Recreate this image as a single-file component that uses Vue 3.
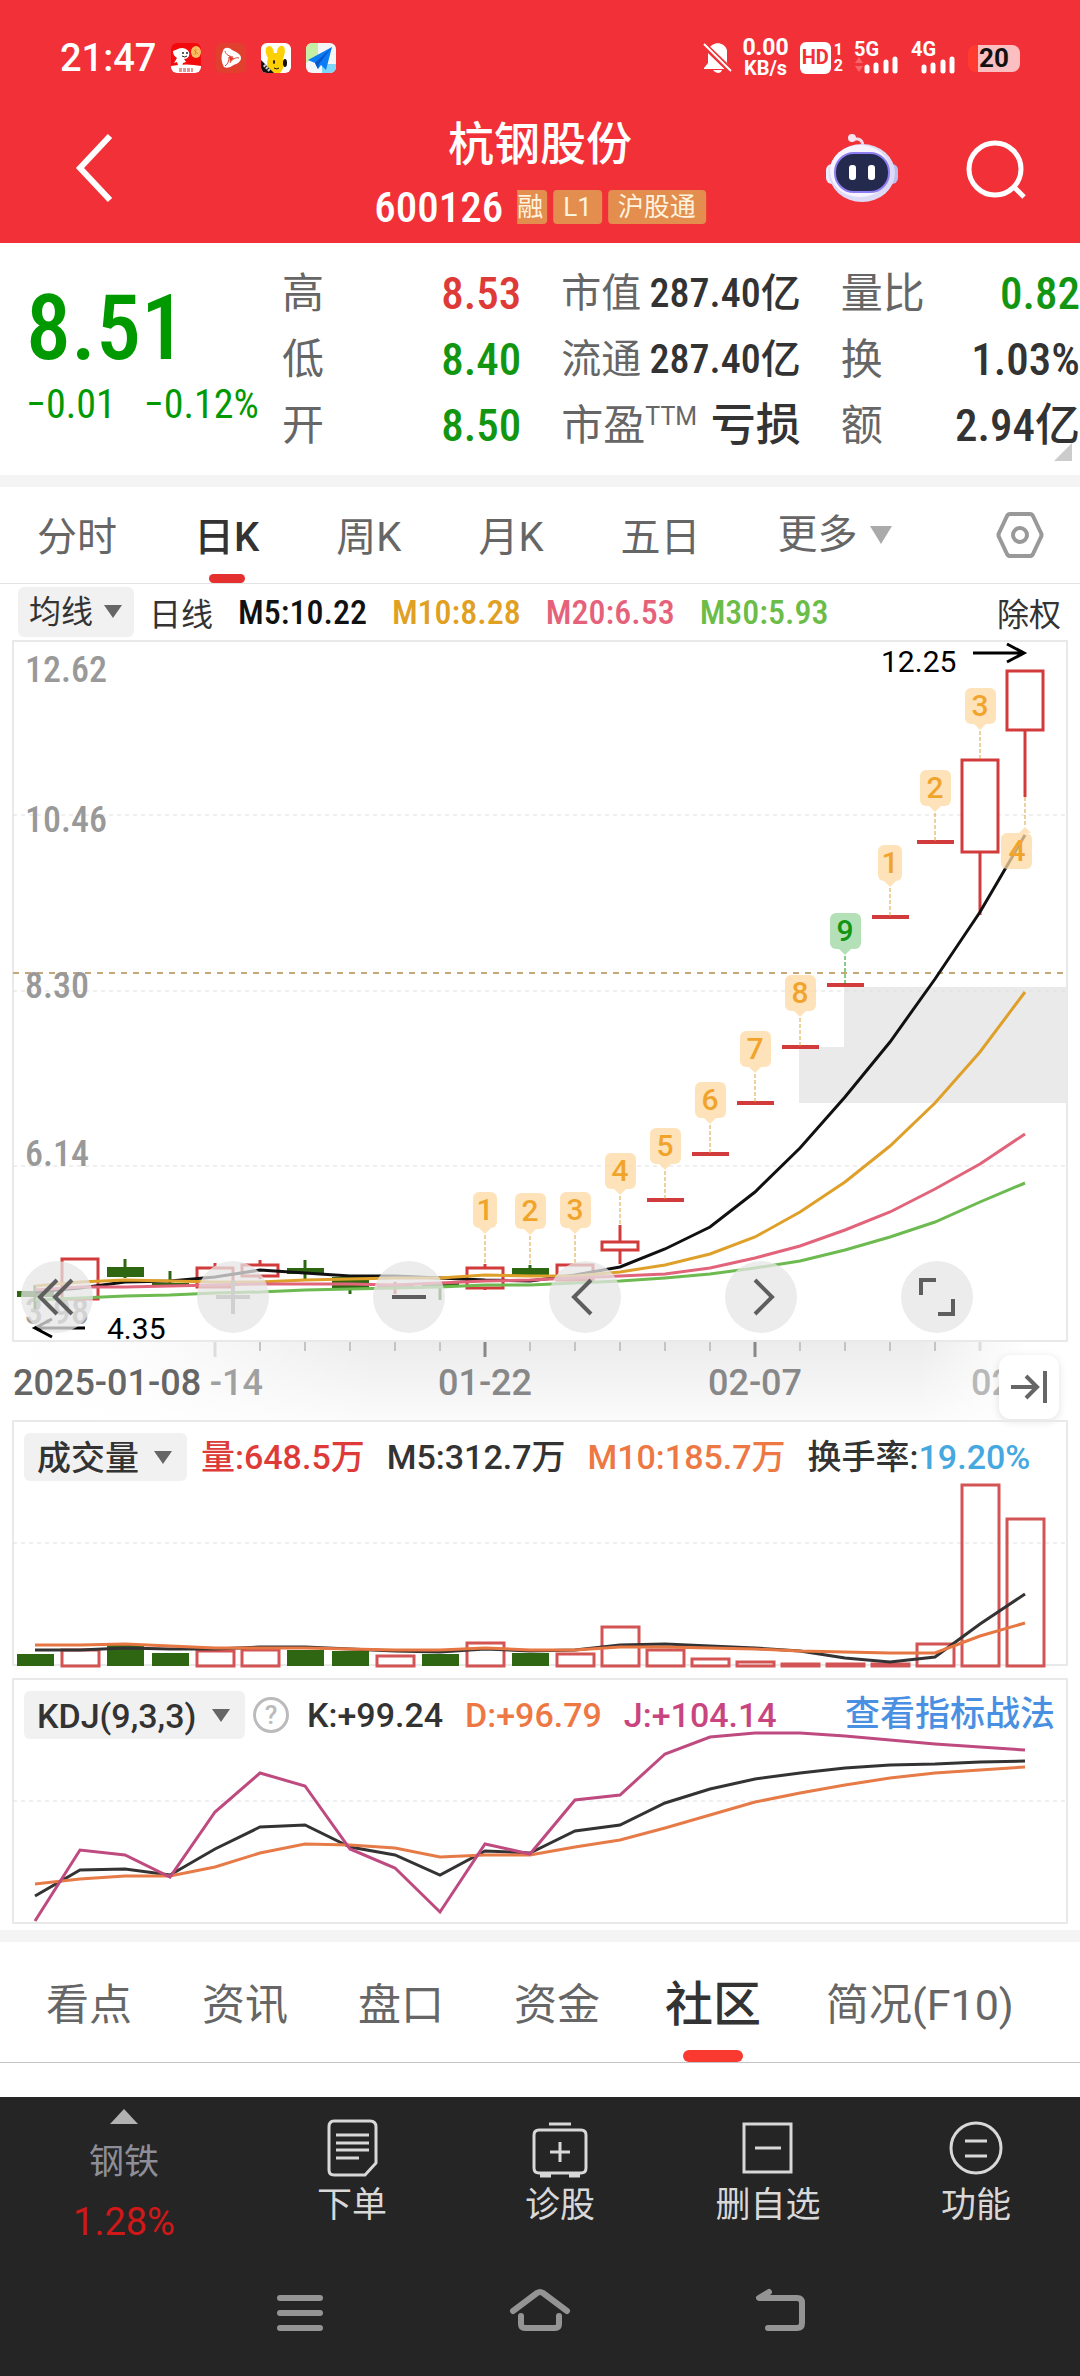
<template>
  <div class="page">
    <header class="top">
      <div class="status-bar">
        <span class="clock">21:47</span>
        <svg class="app-icon" viewBox="0 0 30 30">
          <rect width="30" height="30" rx="6" fill="#f30a0c" />
          <path d="M2 8l5-2c3-2 9-1 11 3 1 4-1 7-5 7l2 3-3 1-1 3-4-1-1-3-3 1 3-5C3 13 2 11 2 8z" fill="#fff" />
          <circle cx="12" cy="10" r="1" fill="#222" />
          <circle cx="16" cy="10" r="1" fill="#222" />
          <path d="M11 13q3 2 5 0" stroke="#222" fill="none" />
          <ellipse cx="25" cy="9" rx="5" ry="6" fill="#f7bd62" />
          <path d="M23 7l4 4M25 6l-1 6" stroke="#e38a2c" fill="none" />
          <path d="M0 23q15-3 30 0v1a6 6 0 0 1-6 6H6a6 6 0 0 1-6-6z" fill="#fff" />
          <path d="M8 26h14M8 28h14" stroke="#c33" stroke-dasharray="3 1" />
        </svg>
        <svg class="app-icon" viewBox="0 0 30 30">
          <rect width="30" height="30" rx="6" fill="#e2402f" />
          <path d="M7 8c1-4 6-4 9-1 4 2 9 4 9 8 0 5-6 6-9 8-3 2-8 3-9-1-2-4-2-10 0-14z" fill="#fff" />
          <path d="M9 8c1 4 4 5 8 6m6 1c-3-1-7 1-9 5m-5 3c3-2 4-5 4-9" stroke="#e2402f" stroke-width="1" fill="none" />
          <path d="M13 13l5 2-4 4z" fill="#e2402f" />
        </svg>
        <svg class="app-icon" viewBox="0 0 30 30">
          <rect width="30" height="30" rx="6" fill="#fff" />
          <path d="M5 5c3-4 7-2 8 5h3c0-6 4-9 7-6 2 4 0 9-1 12 2 6 0 11-3 14H9C5 24 6 18 7 15 5 12 4 8 5 5z" fill="#fdd004" />
          <ellipse cx="24" cy="20" rx="2" ry="4" fill="#111" />
          <ellipse cx="13" cy="19" rx="1" ry="2" fill="#111" />
          <path d="M13 25q3 2 5 0" stroke="#111" fill="none" />
          <path d="M0 17l13 13H6a6 6 0 0 1-6-6z" fill="#111" />
          <path d="M3 22l6 6" stroke="#ccc" stroke-width="3" stroke-dasharray="2 1" />
        </svg>
        <svg class="app-icon" viewBox="0 0 30 30">
          <rect width="30" height="30" rx="6" fill="#f3f5f7" />
          <path d="M6 0h6v12L0 20V6a6 6 0 0 1 6-6z" fill="#c4efa4" />
          <path d="M16 21h14v3a6 6 0 0 1-6 6h-8z" fill="#7fd6fb" />
          <path d="M26 4L2 17l7 3 3 6 3-4 5 5z" fill="#0a7cf5" />
          <path d="M26 4L9 20l3 6 1-5z" fill="#0757c9" />
        </svg>
        <div class="status-right">
          <svg width="27" height="32" viewBox="0 0 27 32">
            <path d="M4 8C8-1 20-1 23 8v13l4 5v1H0v-1l4-5z" fill="#fff" />
            <path d="M9 28h9q-1 3-4 3t-5-3z" fill="#fff" />
            <path d="M-1 2l29 28" stroke="#f23037" stroke-width="6" />
            <path d="M0 2l27 27" stroke="#fff" stroke-width="2" />
          </svg>
          <span class="net-speed"><b>0.00</b><b class="unit">KB/s</b></span>
          <span class="hd"><b class="hd-box">HD</b><span class="hd-sims"><b>1</b><b>2</b></span></span>
          <span class="signal"><b>5G</b>
            <svg width="46" height="18" viewBox="0 0 46 18">
              <path d="M1 7l4-6 4 6zM1 10h8l-4 6z" fill="#f8666b" />
              <path d="M13 11v4M22 9v6M32 6v9M41 3v12" stroke="#fff" stroke-width="5" stroke-linecap="round" />
            </svg>
          </span>
          <span class="signal"><b>4G</b>
            <svg width="46" height="18" viewBox="0 0 46 18">
              <path d="M13 11v4M22 9v6M32 6v9M41 3v12" stroke="#fff" stroke-width="5" stroke-linecap="round" />
            </svg>
          </span>
          <span class="battery">20</span>
        </div>
      </div>
      <div class="title-bar">
        <button class="icon-btn back" aria-label="返回">
          <svg width="40" height="70" viewBox="0 0 40 70"><path d="M36 3L6 35l30 32" fill="none" stroke="#fff" stroke-width="6" /></svg>
        </button>
        <div class="stock">
          <h1>杭钢股份</h1>
          <div class="stock-code">
            <span class="num">600126</span>
            <span class="tag cut">融</span><span class="tag">L1</span><span class="tag">沪股通</span>
          </div>
        </div>
        <div class="title-actions">
          <button class="icon-btn" aria-label="助手">
            <svg width="72" height="70" viewBox="0 0 72 70">
              <path d="M26 6h6q5 1 5 8" fill="none" stroke="#f4d7e8" stroke-width="3" />
              <circle cx="26" cy="5" r="4" fill="#f7e3f0" />
              <rect x="0" y="31" width="14" height="20" rx="6" fill="#eceafd" />
              <rect x="58" y="31" width="14" height="20" rx="6" fill="#b9bdf0" />
              <ellipse cx="36" cy="40" rx="33" ry="29" fill="#dcdaf6" />
              <ellipse cx="34" cy="38" rx="30" ry="26" fill="#f7f4ff" />
              <rect x="9" y="20" width="54" height="39" rx="19" fill="#232a4e" stroke="#8e7df0" stroke-width="2" />
              <rect x="23" y="32" width="7" height="15" rx="3" fill="#fff" />
              <rect x="42" y="32" width="7" height="15" rx="3" fill="#fff" />
            </svg>
          </button>
          <button class="icon-btn" aria-label="搜索">
            <svg width="60" height="60" viewBox="0 0 60 60">
              <circle cx="29" cy="31" r="26" fill="none" stroke="#fff" stroke-width="5" />
              <path d="M48 49l10 10" stroke="#fff" stroke-width="5" />
            </svg>
          </button>
        </div>
      </div>
    </header>

    <section class="quote">
      <div class="price num">
        <div class="last">8.51</div>
        <div class="change"><span>−0.01</span><span>−0.12%</span></div>
      </div>
      <dl v-for="(col, c) in quoteCols" :key="c" class="quote-col">
        <div v-for="row in col" :key="row.label">
          <dt :class="{ small: row.small }">{{ row.label }}<sup v-if="row.sup">{{ row.sup }}</sup></dt>
          <dd class="num" :class="[row.tone, { small: row.small }]">{{ row.value }}</dd>
        </div>
      </dl>
      <i class="corner"></i>
    </section>

    <nav class="periods">
      <button v-for="p in periods" :key="p" :class="{ active: p === period }" @click="period = p">{{ p }}</button>
      <button class="more">更多<i class="caret"></i></button>
      <button class="settings" aria-label="设置">
        <svg width="48" height="48" viewBox="0 0 48 48" fill="none" stroke="#999" stroke-width="4">
          <path d="M14 3h20q2 0 3 2l8 17q1 2 0 4l-8 17q-1 2-3 2H14q-2 0-3-2L3 26q-1-2 0-4l8-17q1-2 3-2z" />
          <circle cx="24" cy="24" r="7" />
        </svg>
      </button>
    </nav>

    <div class="ma-row">
      <label class="picker ma"><select aria-label="主图指标"><option>均线</option></select></label>
      <span>日线</span>
      <span v-for="m in averages" :key="m.text" class="num ma-value" :style="{ color: m.color }">{{ m.text }}</span>
      <button class="adjust">除权</button>
    </div>

    <section class="k-chart">
      <svg viewBox="0 0 1080 702">
        <path d="M799 407h45v-60h223v116H799z" fill="#eaeaea" />
        <rect x="13" y="1" width="1054" height="700" class="frame" />
        <path d="M13 175H1067M13 351H1067M13 526H1067" class="grid" />
        <path d="M13 333H1067" class="last-line" />
        <g class="scale num">
          <text v-for="s in scale" :key="s.y" x="25" :y="s.y">{{ s.text }}</text>
        </g>
        <g v-for="(c, i) in candles" :key="i" :class="c.up ? 'up' : 'down'">
          <path v-if="c.high < c.top" :d="`M${x(i)} ${c.high}V${c.top}`" />
          <path v-if="c.low > c.bottom" :d="`M${x(i)} ${c.bottom}V${c.low}`" />
          <rect v-if="c.up && c.bottom - c.top > 6" :x="x(i) - 18" :y="c.top + 1" width="36" :height="c.bottom - c.top - 2" />
          <rect v-else class="solid" :x="x(i) - 18" :y="c.top" width="37" :height="c.bottom - c.top" />
        </g>
        <polyline v-for="l in maLines" :key="l.color" :points="points(l.data)" fill="none" :stroke="l.color" stroke-width="3" />
        <g v-for="b in badges" :key="b.i" class="badge" :class="{ green: b.n === 9 }">
          <path class="stem" :d="`M${x(b.i)} ${b.y + 43}v29`" />
          <path :d="`M${x(b.i) - 6} ${b.y + 36}h12l-6 6z`" />
          <rect :x="x(b.i) - (b.n === 1 ? 12 : 15)" :y="b.y" :width="b.n === 1 ? 24 : 31" height="36" rx="6" />
          <text :x="x(b.i)" :y="b.y + 28">{{ b.n }}</text>
        </g>
        <g class="badge">
          <path class="stem" d="M1025 157v30" />
          <path d="M1019 193h12l-6-6z" />
          <rect x="1001" y="193" width="31" height="36" rx="6" />
          <text x="1017" y="221">4</text>
        </g>
        <g class="extreme">
          <text x="881" y="32">12.25</text>
          <path d="M973 13h50M1007 4l17 9-17 9" />
          <text x="107" y="699">4.35</text>
          <path d="M85 688H35M52 679l-17 9 17 9" />
        </g>
      </svg>
      <div class="tools">
        <button v-for="t in tools" :key="t.name" :aria-label="t.name" :class="{ off: t.off }">
          <svg width="40" height="40" viewBox="0 0 40 40"><path :d="t.d" /></svg>
        </button>
      </div>
    </section>

    <div class="date-axis">
      <svg viewBox="0 0 1080 78">
        <defs>
          <linearGradient id="shade" x1="0" y1="0" x2="0" y2="1">
            <stop offset="0" stop-color="#ececec" />
            <stop offset="1" stop-color="#fbfbfb" />
          </linearGradient>
          <linearGradient id="edge">
            <stop offset="0" stop-color="#fff" />
            <stop offset="0.12" stop-color="#fff" stop-opacity="0.9" />
            <stop offset="0.35" stop-color="#fff" stop-opacity="0" />
            <stop offset="0.85" stop-color="#fff" stop-opacity="0" />
            <stop offset="0.95" stop-color="#fff" />
          </linearGradient>
        </defs>
        <rect width="1080" height="78" fill="url(#shade)" />
        <rect width="1080" height="78" fill="url(#edge)" />
        <path v-for="i in 16" :key="i" class="tick" :d="`M${x(i + 4)} 0v9`" />
        <path class="tick major" d="M485 0v15M755 0v15" />
        <path class="tick faint" d="M215 0v15M980 0v9" />
        <g class="dates">
          <text x="13" y="53" fill="#666">2025-01-08</text>
          <text x="263" y="53" text-anchor="end" fill="#a0a0a0">-14</text>
          <text x="485" y="53" text-anchor="middle">01-22</text>
          <text x="755" y="53" text-anchor="middle">02-07</text>
          <text x="971" y="53" fill="#b8b8b8">02</text>
        </g>
      </svg>
      <button class="to-end" aria-label="最新">
        <svg width="40" height="36" viewBox="0 0 40 36"><path d="M2 18h26M17 7l11 11-11 11M36 2v32" /></svg>
      </button>
    </div>

    <section class="sub-chart">
      <div class="sub-head">
        <label class="picker"><select aria-label="副图指标一"><option>成交量</option></select></label>
        <span class="red vol">量:648.5万</span>
        <span>M5:312.7万</span>
        <span class="orange">M10:185.7万</span>
        <span>换手率:<em>19.20%</em></span>
      </div>
      <svg viewBox="0 0 1080 248">
        <rect x="13" y="1" width="1054" height="244" class="frame" />
        <path d="M13 123H1067" class="grid" />
        <g v-for="(v, i) in volumes" :key="i" :class="candles[i].up ? 'up thin' : 'down'">
          <rect v-if="candles[i].up" :x="x(i) - 18" :y="v + 1" width="37" :height="245 - v" />
          <rect v-else class="solid" :x="x(i) - 18" :y="v" width="37" :height="246 - v" />
        </g>
        <polyline v-for="l in volLines" :key="l.color" :points="points(l.data)" fill="none" :stroke="l.color" stroke-width="3" />
      </svg>
    </section>

    <section class="sub-chart kdj">
      <div class="sub-head">
        <label class="picker"><select aria-label="副图指标二"><option>KDJ(9,3,3)</option></select></label>
        <button class="help" aria-label="说明">?</button>
        <span>K:+99.24</span>
        <span class="orange">D:+96.79</span>
        <span class="purple">J:+104.14</span>
        <a href="#">查看指标战法</a>
      </div>
      <svg viewBox="0 0 1080 248">
        <rect x="13" y="1" width="1054" height="244" class="frame" />
        <path d="M13 123H1067" class="grid" />
        <polyline v-for="l in kdjLines" :key="l.color" :points="points(l.data)" fill="none" :stroke="l.color" stroke-width="3" />
      </svg>
    </section>

    <nav class="info-tabs">
      <button v-for="t in infoTabs" :key="t" :class="{ active: t === infoTab }" @click="infoTab = t">{{ t }}</button>
    </nav>

    <footer class="bottom">
      <div class="actions">
        <button class="sector">
          <i></i>
          <span>钢铁</span>
          <strong>1.28%</strong>
        </button>
        <button v-for="a in actions" :key="a.label">
          <svg width="56" height="60" viewBox="0 0 56 60"><path :d="a.d" /></svg>
          <span>{{ a.label }}</span>
        </button>
      </div>
      <div class="system-nav">
        <button aria-label="任务"><svg width="60" height="48" viewBox="0 0 60 48"><path d="M10 9h40M10 24h40M10 39h40" /></svg></button>
        <button aria-label="主页"><svg width="60" height="48" viewBox="0 0 60 48"><path d="M3 22L27 4q3-2 6 0l24 18M11 27v8q0 4 4 4h30q4 0 4-4v-8" /></svg></button>
        <button aria-label="返回"><svg width="60" height="48" viewBox="0 0 60 48"><path d="M19 3L9 9h38q5 0 5 5v20q0 5-5 5H18" /></svg></button>
      </div>
    </footer>
  </div>
</template>

<script setup>
import { ref } from 'vue';

const quoteCols = [
  [
    { label: '高', value: '8.53', tone: 'red' },
    { label: '低', value: '8.40', tone: 'green' },
    { label: '开', value: '8.50', tone: 'green' }
  ],
  [
    { label: '市值', value: '287.40亿', small: true },
    { label: '流通', value: '287.40亿', small: true },
    { label: '市盈', sup: 'TTM', value: '亏损' }
  ],
  [
    { label: '量比', value: '0.82', tone: 'green' },
    { label: '换', value: '1.03%' },
    { label: '额', value: '2.94亿' }
  ]
];

const periods = ['分时', '日K', '周K', '月K', '五日'];
const period = ref('日K');
const infoTabs = ['看点', '资讯', '盘口', '资金', '社区', '简况(F10)'];
const infoTab = ref('社区');

const averages = [
  { text: 'M5:10.22', color: '#111' },
  { text: 'M10:8.28', color: '#e0a022' },
  { text: 'M20:6.53', color: '#e5627a' },
  { text: 'M30:5.93', color: '#6cbd48' }
];

const scale = [
  { text: '12.62', y: 42 },
  { text: '10.46', y: 192 },
  { text: '8.30', y: 358 },
  { text: '6.14', y: 526 },
  { text: '3.98', y: 684 }
];

// 每根K线间隔45
const x = (i) => 35 + i * 45;
const points = (data) => data.map((y, i) => `${x(i)},${y}`).join(' ');

// [涨跌, 最高, 实体上沿, 实体下沿, 最低]
const candles = [
  [0, 645, 651, 657, 669],
  [1, 618, 618, 660, 660],
  [0, 619, 627, 637, 638],
  [0, 631, 643, 646, 647],
  [1, 623, 627, 648, 648],
  [1, 620, 624, 637, 639],
  [0, 620, 628, 634, 640],
  [0, 637, 637, 648, 654],
  [1, 642, 644, 647, 654],
  [0, 643, 643, 646, 660],
  [1, 624, 627, 649, 650],
  [0, 625, 628, 635, 635],
  [1, 624, 624, 641, 641],
  [1, 585, 601, 611, 624],
  [1, 558, 558, 562, 562],
  [1, 512, 512, 516, 516],
  [1, 461, 461, 465, 465],
  [1, 405, 405, 409, 409],
  [1, 343, 343, 347, 347],
  [1, 275, 275, 279, 279],
  [1, 200, 200, 204, 204],
  [1, 119, 119, 213, 275],
  [1, 30, 30, 91, 157]
].map(([up, high, top, bottom, low]) => ({ up, high, top, bottom, low }));

const maLines = [
  { color: '#111', data: [652, 648, 642, 641, 637, 630, 633, 636, 636, 638, 640, 641, 635, 627, 609, 587, 552, 508, 457, 402, 339, 272, 195] },
  { color: '#dfa02a', data: [646, 642, 640, 641, 642, 642, 640, 639, 638, 638, 635, 636, 636, 632, 625, 614, 597, 572, 542, 506, 463, 412, 352] },
  { color: '#e2647b', data: [650, 647, 647, 646, 645, 644, 644, 644, 645, 643, 641, 640, 638, 636, 634, 628, 618, 606, 590, 572, 549, 524, 494] },
  { color: '#6dba50', data: [660, 658, 656, 655, 653, 652, 650, 649, 648, 647, 645, 645, 643, 641, 638, 634, 628, 621, 610, 597, 582, 562, 543] }
];

// 九转序列
const badges = [
  { i: 10, n: 1, y: 552 },
  { i: 11, n: 2, y: 553 },
  { i: 12, n: 3, y: 552 },
  { i: 13, n: 4, y: 513 },
  { i: 14, n: 5, y: 488 },
  { i: 15, n: 6, y: 442 },
  { i: 16, n: 7, y: 391 },
  { i: 17, n: 8, y: 335 },
  { i: 18, n: 9, y: 273 },
  { i: 19, n: 1, y: 205 },
  { i: 20, n: 2, y: 130 },
  { i: 21, n: 3, y: 48 }
];

const tools = [
  { name: '最早', d: 'M20 3L3 20l17 17M35 3L18 20l17 17' },
  { name: '放大', d: 'M3 20h34M20 3v34', off: true },
  { name: '缩小', d: 'M3 20h34' },
  { name: '左移', d: 'M26 3L9 20l17 17' },
  { name: '右移', d: 'M14 3l17 17-17 17' },
  { name: '全屏', d: 'M19 3H4v15M21 37h15V22' }
];

const volumes = [234, 229, 225, 233, 230, 229, 230, 231, 235, 234, 222, 233, 233, 206, 229, 238, 241, 243, 243, 243, 223, 64, 98];
const volLines = [
  { color: '#333', data: [230, 230, 228, 229, 229, 227, 227, 229, 231, 232, 229, 231, 230, 225, 224, 226, 228, 231, 238, 242, 237, 204, 174] },
  { color: '#e67642', data: [225, 225, 224, 226, 228, 228, 228, 229, 230, 230, 228, 230, 230, 227, 227, 228, 229, 231, 232, 233, 233, 216, 203] }
];
const kdjLines = [
  { color: '#333', data: [218, 192, 191, 197, 171, 149, 147, 169, 177, 197, 173, 175, 153, 147, 125, 111, 101, 95, 90, 87, 86, 84, 83] },
  { color: '#e67b48', data: [206, 201, 198, 198, 189, 175, 166, 167, 170, 179, 177, 177, 169, 162, 150, 137, 124, 115, 107, 100, 95, 92, 89] },
  { color: '#bf4a80', data: [243, 172, 177, 199, 134, 95, 108, 171, 190, 234, 166, 176, 122, 117, 76, 59, 55, 55, 58, 62, 66, 69, 72] }
];

const actions = [
  { label: '下单', d: 'M10 3h36q6 0 6 6v36L41 57H10q-5 0-5-5V9q0-6 5-6zM12 17h33M12 25h33M12 32h33M12 40h23' },
  { label: '诊股', d: 'M7 12h42q5 0 5 5v33q0 5-5 5H7q-5 0-5-5V17q0-5 5-5zM17 6h22M28 24v20M18 34h20M8 58h11M37 58h11' },
  { label: '删自选', d: 'M4 6h47v48H4zM15 30h26' },
  { label: '功能', d: 'M3 30a25 25 0 1 0 50 0a25 25 0 1 0-50 0M17 23h22M17 38h22' }
];
</script>

<style>
body {
  background: #252525;
}
</style>

<style scoped>
.page {
  font-family: Roboto, "Noto Sans CJK SC", sans-serif;
  color: #333;
  background: #fff;
}
.num {
  font-family: "Roboto Condensed", Roboto, "Noto Sans CJK SC", sans-serif;
  font-weight: 500;
}
button {
  padding: 0;
  border: none;
  background: none;
  font: inherit;
  color: inherit;
  cursor: pointer;
}
svg {
  display: block;
  overflow: visible;
}
.red {
  color: #dd3a38;
}
.green {
  color: #129612;
}
.orange {
  color: #ee7844;
}
.purple {
  color: #c9457f;
}

/* 顶部 */
.top {
  height: 243px;
  background: #f23037;
  color: #fff;
}
.status-bar {
  display: flex;
  align-items: center;
  gap: 15px;
  height: 116px;
  padding: 0 60px;
}
.clock {
  font-size: 38px;
  font-weight: 500;
}
.app-icon {
  width: 30px;
  height: 30px;
}
.status-right {
  display: flex;
  align-items: center;
  gap: 11px;
  margin-left: auto;
}
.net-speed {
  display: flex;
  flex-direction: column;
  align-items: center;
  font-size: 23px;
  line-height: 21px;
}
.net-speed .unit {
  font-size: 20px;
}
.hd {
  display: flex;
  gap: 3px;
}
.hd-box {
  padding: 0 2px;
  border-radius: 6px;
  background: #fff;
  color: #f23037;
  font-size: 20px;
  line-height: 30px;
}
.hd-sims {
  display: flex;
  flex-direction: column;
  font-size: 16px;
  line-height: 16px;
}
.signal {
  font-size: 20px;
  line-height: 14px;
}
.battery {
  width: 52px;
  border-radius: 8px;
  background: linear-gradient(90deg, #ff3b30 20%, #fbbfc2 20%);
  color: #111;
  font-size: 26px;
  font-weight: 700;
  line-height: 27px;
  text-align: center;
}
.title-bar {
  position: relative;
  display: flex;
  justify-content: space-between;
  align-items: center;
  height: 104px;
  padding: 0 54px 0 74px;
}
.stock {
  position: absolute;
  left: 50%;
  top: 0;
  transform: translateX(-50%);
  text-align: center;
}
.stock h1 {
  margin: 0;
  font-size: 46px;
  font-weight: 500;
  line-height: 56px;
}
.stock-code {
  display: flex;
  align-items: center;
  gap: 6px;
  font-size: 43px;
  line-height: 70px;
}
.tag {
  padding: 0 10px;
  border-radius: 4px;
  background: #e38d4e;
  color: #fff3df;
  font-size: 26px;
  line-height: 34px;
}
.tag.cut {
  margin-left: 8px;
  padding: 0 4px 0 0;
  border-radius: 0 4px 4px 0;
}
.title-actions {
  display: flex;
  align-items: center;
  gap: 68px;
}

/* 行情 */
.quote {
  position: relative;
  display: grid;
  grid-template-columns: 242px 1fr 1fr 1fr;
  gap: 40px;
  padding: 18px 0 16px;
  border-bottom: 12px solid #f4f4f4;
}
.price {
  padding-left: 26px;
  color: #009a00;
}
.last {
  font-size: 90px;
  line-height: 104px;
  padding-top: 16px;
}
.change {
  display: flex;
  gap: 28px;
  font-size: 40px;
  font-weight: 400;
  line-height: 48px;
  white-space: nowrap;
}
.quote-col {
  margin: 0;
  font-size: 42px;
  line-height: 66px;
}
.quote-col > div {
  display: flex;
  justify-content: space-between;
  height: 66px;
}
.quote-col dt {
  color: #666;
  white-space: nowrap;
}
.quote-col dd {
  margin: 0;
  font-size: 45px;
  white-space: nowrap;
}
.quote-col .small {
  font-size: 40px;
}
.quote-col sup {
  font-size: 25px;
  line-height: 0;
}
.corner {
  position: absolute;
  right: 8px;
  bottom: 14px;
  border: 9px solid transparent;
  border-right-color: #ccc;
  border-bottom-color: #ccc;
}

/* 周期 */
.periods {
  display: flex;
  align-items: center;
  gap: 77px;
  height: 96px;
  padding: 0 36px 0 37px;
  border-bottom: 1px solid #e3e3e3;
  color: #666;
  font-size: 40px;
}
.periods button {
  position: relative;
  height: 96px;
  line-height: 102px;
}
.periods .active {
  color: #333;
  font-weight: 500;
}
.periods .active::after {
  content: "";
  position: absolute;
  left: 50%;
  bottom: 0;
  width: 36px;
  height: 9px;
  margin-left: -18px;
  border-radius: 5px;
  background: #e53030;
}
.more {
  display: flex;
  align-items: center;
  gap: 12px;
}
.caret {
  border: 11px solid transparent;
  border-top: 18px solid #aaa;
  border-bottom: none;
}
.periods .settings {
  margin-left: auto;
}

/* 指标选择 */
.picker {
  position: relative;
}
.picker select {
  display: block;
  appearance: none;
  height: 48px;
  padding: 0 48px 0 13px;
  border: none;
  border-radius: 6px;
  background: #f1f1f1;
  color: #333;
  font: inherit;
}
.picker::after {
  content: "";
  position: absolute;
  right: 15px;
  top: 18px;
  border: 9px solid transparent;
  border-top: 13px solid #666;
  border-bottom: none;
  pointer-events: none;
}
.picker.ma {
  margin-right: -10px;
}
.picker.ma select {
  height: 50px;
  padding: 0 40px 0 11px;
}
.picker.ma::after {
  right: 12px;
}
.ma-row {
  display: flex;
  align-items: center;
  gap: 25px;
  height: 56px;
  padding: 0 19px 0 18px;
  font-size: 32px;
}
.ma-value {
  font-size: 34px;
}
.adjust {
  margin-left: auto;
}

/* 图表 */
.k-chart,
.date-axis,
.sub-chart {
  position: relative;
}
.k-chart > svg,
.date-axis > svg,
.sub-chart > svg {
  width: 100%;
}
.frame {
  fill: none;
  stroke: #e9e9e9;
  stroke-width: 2;
}
.grid {
  stroke: #e0e0e0;
  stroke-dasharray: 4 4;
}
.last-line {
  stroke: #c4a878;
  stroke-width: 2;
  stroke-dasharray: 6 6;
}
.scale {
  fill: #999;
  font-size: 36px;
}
.up {
  fill: #fff;
  stroke: #d23b3b;
  stroke-width: 3;
}
.up.thin {
  fill: none;
  stroke: #d35454;
}
.up .solid {
  fill: #d23b3b;
  stroke: none;
}
.down {
  fill: #2f6612;
  stroke: #2f6612;
  stroke-width: 3;
}
.down .solid {
  stroke: none;
}
.badge {
  fill: #fdd9a3;
  fill-opacity: 0.75;
}
.badge text {
  fill: #f1a42c;
  fill-opacity: 1;
  font-size: 30px;
  font-weight: 500;
  text-anchor: middle;
}
.badge .stem {
  stroke: #d9a441;
  stroke-dasharray: 4 2;
}
.badge.green {
  fill: #9bd69f;
}
.badge.green text {
  fill: #129612;
}
.badge.green .stem {
  stroke: #129612;
}
.extreme {
  fill: #000;
  font-size: 30px;
}
.extreme path {
  fill: none;
  stroke: #000;
  stroke-width: 3;
}
.tools {
  position: absolute;
  left: 0;
  right: 0;
  bottom: 9px;
  display: flex;
  justify-content: space-between;
  padding: 0 107px 0 21px;
}
.tools button {
  display: flex;
  align-items: center;
  justify-content: center;
  width: 72px;
  height: 72px;
  border-radius: 50%;
  background: rgba(230, 230, 230, 0.75);
}
.tools path {
  fill: none;
  stroke: #5e5e5e;
  stroke-width: 4;
}
.tools .off path {
  stroke: #d0d0d0;
}
.tick {
  stroke: #c4c4c4;
  stroke-width: 2;
}
.tick.major {
  stroke: #888;
  stroke-width: 3;
}
.tick.faint {
  stroke: #ddd;
  stroke-width: 3;
}
.dates {
  fill: #888;
  font-size: 36px;
  font-weight: 500;
}
.to-end {
  position: absolute;
  right: 21px;
  top: 13px;
  display: flex;
  align-items: center;
  justify-content: center;
  width: 60px;
  height: 64px;
  border-radius: 12px;
  background: #fff;
  box-shadow: 0 2px 8px rgba(0, 0, 0, 0.12);
}
.to-end path {
  fill: none;
  stroke: #666;
  stroke-width: 4;
}
.sub-chart {
  height: 258px;
}
.sub-chart.kdj {
  height: 252px;
}
.sub-head {
  position: absolute;
  left: 24px;
  right: 25px;
  top: 12px;
  display: flex;
  align-items: center;
  gap: 22px;
  font-size: 34px;
  font-weight: 500;
  line-height: 50px;
}
.sub-head .vol {
  margin-left: -8px;
}
.sub-head em {
  color: #45a8e0;
  font-style: normal;
}
.help {
  box-sizing: border-box;
  width: 36px;
  height: 36px;
  margin: 0 -4px 0 -14px;
  border: 3px solid #bbb;
  border-radius: 50%;
  color: #bbb;
  font-size: 26px;
  line-height: 30px;
}
.sub-head a {
  margin-left: auto;
  color: #4a90e2;
  font-size: 35px;
  text-decoration: none;
}

/* 资讯 */
.info-tabs {
  display: flex;
  gap: 70px;
  height: 120px;
  margin-bottom: 34px;
  padding-left: 46px;
  border-top: 12px solid #f4f4f4;
  border-bottom: 1px solid #c4c4c4;
  color: #666;
  font-size: 43px;
}
.info-tabs button {
  position: relative;
  height: 120px;
  line-height: 126px;
  white-space: nowrap;
}
.info-tabs .active {
  margin: 0 -5px;
  color: #333;
  font-size: 48px;
  font-weight: 500;
}
.info-tabs .active::after {
  content: "";
  position: absolute;
  left: 50%;
  bottom: 0;
  width: 60px;
  height: 12px;
  margin-left: -30px;
  border-radius: 6px;
  background: #fa3a30;
}

/* 底部 */
.bottom {
  background: #252525;
}
.actions {
  display: grid;
  grid-template-columns: 248fr 208fr 208fr 208fr 208fr;
  height: 168px;
  color: #d8d8d8;
  font-size: 35px;
}
.actions button {
  display: flex;
  flex-direction: column;
  align-items: center;
  padding-top: 21px;
  line-height: 56px;
}
.actions path {
  fill: none;
  stroke: #d8d8d8;
  stroke-width: 3;
}
.actions .sector {
  padding-top: 12px;
  color: #8e8e98;
}
.sector i {
  margin-bottom: 11px;
  border: 14px solid transparent;
  border-top: none;
  border-bottom: 15px solid #b2b2b2;
}
.sector strong {
  color: #d01818;
  font-size: 38px;
  font-weight: 400;
  line-height: 62px;
}
.system-nav {
  display: flex;
  justify-content: center;
  gap: 180px;
  padding: 24px 0 39px;
}
.system-nav path {
  fill: none;
  stroke: #949494;
  stroke-width: 6;
  stroke-linecap: round;
  stroke-linejoin: round;
}
</style>
